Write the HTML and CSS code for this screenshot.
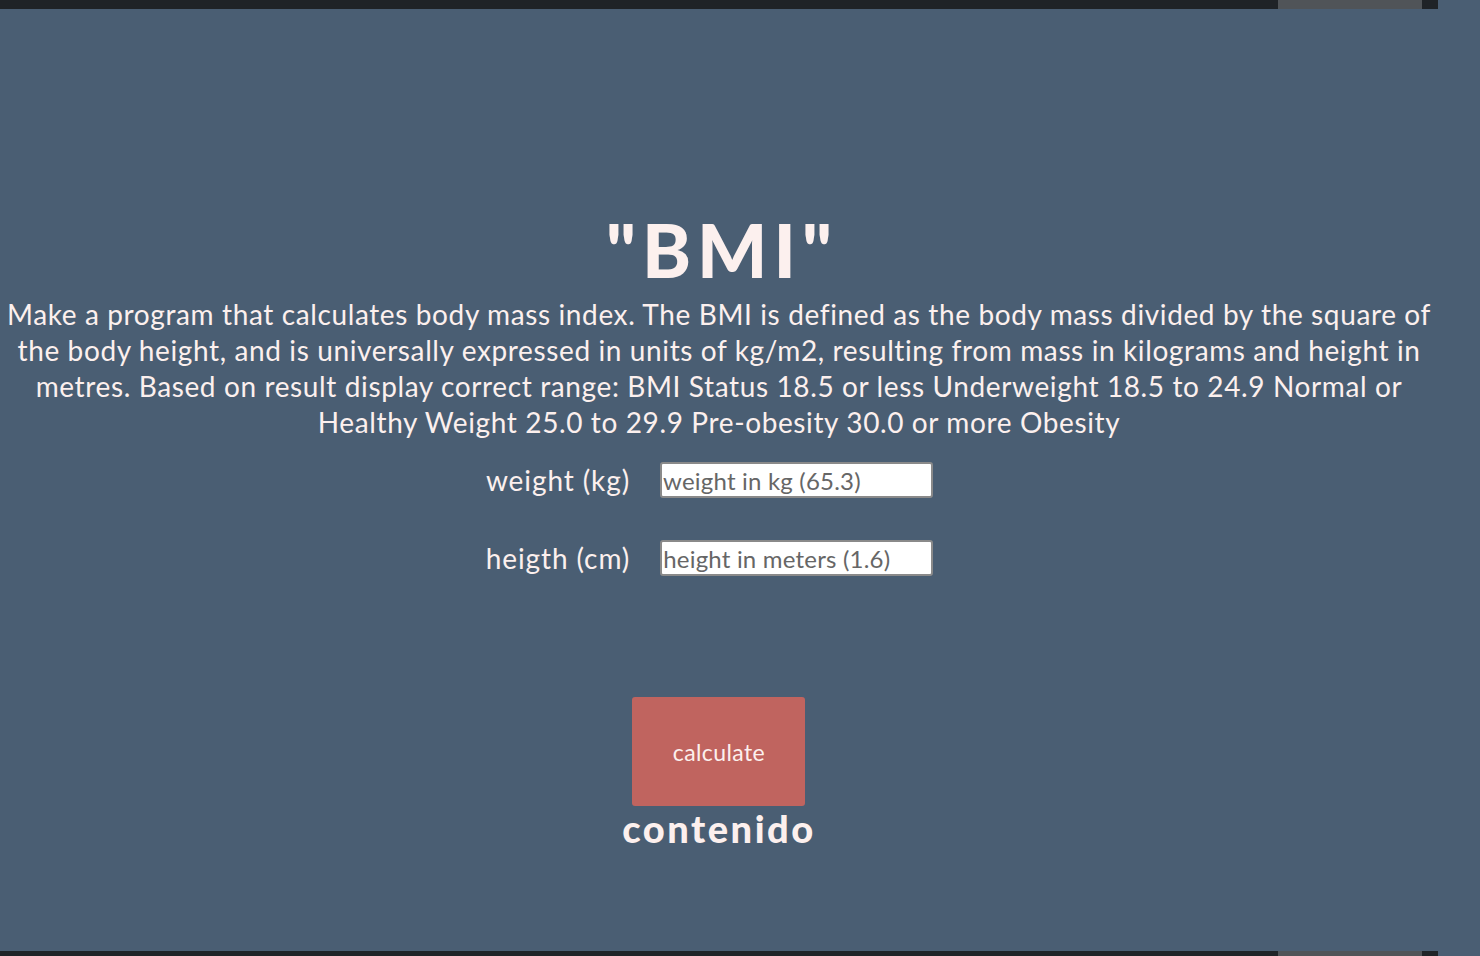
FILE: index.html
```html
<!DOCTYPE html>
<html lang="en">
<head>
<meta charset="utf-8">
<title>BMI</title>
<link rel="stylesheet" href="styles.css">
</head>
<body>
<div class="bar bar-top">
  <span class="seg seg-dark"></span><span class="seg seg-gray"></span><span class="seg seg-dark2"></span>
</div>
<main class="page">
  <h1 class="title">"BMI"</h1>
  <p class="intro">Make a program that calculates body mass index. The BMI is defined as the body mass divided by the square of the body height, and is universally expressed in units of kg/m2, resulting from mass in kilograms and height in metres. Based on result display correct range: BMI Status 18.5 or less Underweight 18.5 to 24.9 Normal or Healthy Weight 25.0 to 29.9 Pre-obesity 30.0 or more Obesity</p>
  <form class="form">
    <div class="row">
      <label class="label" for="w">weight (kg)</label>
      <input class="field" id="w" type="text" placeholder="weight in kg (65.3)">
    </div>
    <div class="row">
      <label class="label" for="h">heigth (cm)</label>
      <input class="field" id="h" type="text" placeholder="height in meters (1.6)">
    </div>
    <button class="btn" type="button">calculate</button>
  </form>
  <div class="result">contenido</div>
</main>
<div class="bar bar-bottom">
  <span class="seg seg-dark"></span><span class="seg seg-gray"></span><span class="seg seg-dark2"></span>
</div>
</body>
</html>
```
FILE: styles.css
```css
html, body {
  margin: 0;
  padding: 0;
}
body {
  width: 1480px;
  height: 956px;
  overflow: hidden;
  background: #4a5e73;
  font-family: "Lato", "Open Sans", sans-serif;
  color: #fcf0ee;
  display: flex;
  flex-direction: column;
}
.bar {
  display: flex;
  flex: none;
}
.bar-top { height: 9px; }
.bar-bottom { height: 5px; }
.seg { display: block; height: 100%; }
.seg-dark { width: 1278px; background: #1f2327; }
.seg-gray { width: 144px; background: #505458; }
.seg-dark2 { width: 16px; background: #1f2327; }
.page {
  flex: 1;
  width: 1438px;
  display: flex;
  flex-direction: column;
  align-items: center;
  padding-top: 199px;
  box-sizing: border-box;
}
.title {
  margin: 0;
  font-size: 74px;
  line-height: 84px;
  font-weight: 900;
  letter-spacing: 6px;
  padding-left: 6px;
}
.intro {
  margin: 4px 0 0;
  padding: 0 2px;
  text-align: center;
  font-size: 28px;
  line-height: 36px;
  letter-spacing: 0.62px;
}
.form {
  display: flex;
  flex-direction: column;
  align-items: center;
  margin-top: 22px;
}
.row {
  display: flex;
  align-items: center;
  gap: 30px;
  height: 36px;
  margin-bottom: 42px;
  padding-right: 19px;
}
.label {
  font-size: 28px;
  letter-spacing: 0.9px;
}
.field {
  width: 273px;
  height: 36px;
  box-sizing: border-box;
  border: 2px solid #8a8a8a;
  border-radius: 3px;
  background: #fff;
  padding: 0 1px;
  font-family: inherit;
  font-size: 24px;
  letter-spacing: 0.2px;
  color: #333;
}
.field::placeholder { color: #666666; }
.btn {
  margin-top: 79px;
  width: 173px;
  height: 109px;
  border: none;
  border-radius: 3px;
  background: #c0645f;
  color: #fcf0ee;
  font-family: inherit;
  font-size: 23px;
  letter-spacing: 0.4px;
}
.result {
  font-size: 38px;
  font-weight: 900;
  line-height: 44px;
  letter-spacing: 2.5px;
}
```
